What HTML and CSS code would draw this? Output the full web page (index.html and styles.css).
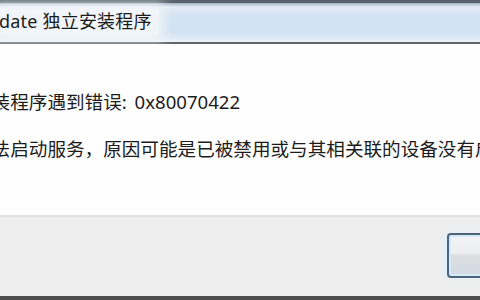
FILE: index.html
```html
<!DOCTYPE html>
<html lang="zh-CN">
<head>
  <meta charset="UTF-8" />
  <title>Windows Update 独立安装程序</title>
  <link rel="stylesheet" href="styles.css">
</head>
<body>
  <div class="window">
    <div class="titlebar">
      <span class="title">date 独立安装程序</span>
    </div>

    <div class="content">
      <div class="msg main">安装程序遇到错误: 0x80070422</div>
      <div class="msg detail">无法启动服务，原因可能是已被禁用或与其相关联的设备没有启动。</div>
    </div>

    <div class="footer">
      <button class="btn">关闭</button>
    </div>
    <div class="frame-bottom"></div>
  </div>
</body>
</html>
```

FILE: styles.css
```css
* {
  box-sizing: border-box;
  margin: 0;
  padding: 0;
}

html, body {
  width: 480px;
  height: 300px;
  overflow: hidden;
  background: #ffffff;
  font-family: "Noto Sans", "Noto Sans CJK SC", sans-serif;
}

.window {
  width: 480px;
  height: 300px;
  display: flex;
  flex-direction: column;
  overflow: hidden;
}

.titlebar {
  height: 44px;
  flex-shrink: 0;
  border-top: 3px solid #56636f;
  border-bottom: 2px solid #5d646b;
  background: linear-gradient(180deg, #9fb0c4 0px, #e4ecf5 4px, #d4e3f3 12px, #d2e3f4 30px, #e6eef7 37px, #f4f7fa 39px);
  display: flex;
  align-items: flex-start;
  padding-top: 6px;
  white-space: nowrap;
}

.title {
  font-size: 18px;
  line-height: 20px;
  color: #1b1b1b;
  margin-left: -1px;
  letter-spacing: 0.2px;
  padding: 2px 6px 4px 0;
  background: rgba(246, 248, 250, 0.85);
  box-shadow: 0 0 10px 6px rgba(246, 248, 250, 0.8);
}

.content {
  flex: 1;
  background: #fefefe;
  padding-top: 48px;
  white-space: nowrap;
}

.msg {
  margin-left: -27px;
  font-size: 18.6px;
  line-height: 20px;
  color: #1c1c1c;
}

.main {
  word-spacing: 3px;
}

.detail {
  margin-top: 27px;
}

.footer {
  height: 81px;
  flex-shrink: 0;
  background: #ededed;
  border-top: 2px solid #e2e2e2;
  display: flex;
  align-items: flex-start;
  padding-top: 16px;
}

.btn {
  margin-left: auto;
  margin-right: -87px;
  width: 120px;
  height: 45px;
  border: 2px solid #4f6478;
  border-radius: 4px;
  background: linear-gradient(180deg, #f3f5f7 0%, #ebedef 45%, #dcdee0 50%, #d2dbe4 100%);
  box-shadow: inset 0 0 0 2px #d6e9f8, -4px 0 5px #e2f1fb;
  font-family: "Noto Sans", "Noto Sans CJK SC", sans-serif;
  font-size: 16px;
  color: #1c1c1c;
}

.frame-bottom {
  height: 4px;
  flex-shrink: 0;
  background: #4d4d4d;
}
```
